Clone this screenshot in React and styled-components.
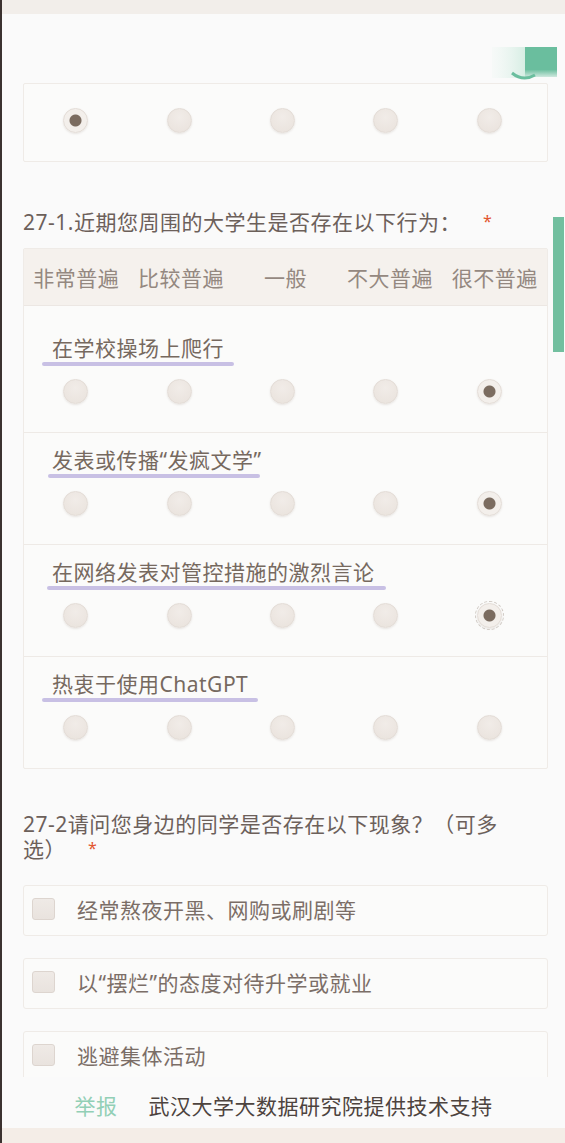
import React from 'react';
import styled, { createGlobalStyle } from 'styled-components';

const GlobalStyle = createGlobalStyle`
  html, body {
    margin: 0;
    padding: 0;
    background: #fafafa;
  }
  body {
    font-family: "Noto Sans", "Noto Sans CJK SC", sans-serif;
  }
`;

const SCALE = ['非常普遍', '比较普遍', '一般', '不大普遍', '很不普遍'];

const ITEMS = [
    { text: '在学校操场上爬行', pick: 4, ul: { l: -10, r: -10 } },
    { text: '发表或传播“发疯文学”', pick: 4, ul: { l: -4, r: 2 } },
    { text: '在网络发表对管控措施的激烈言论', pick: 4, focus: true, ul: { l: -5, r: -11 } },
    { text: '热衷于使用ChatGPT', pick: -1, ul: { l: -10, r: -10 } },
];

const CHOICES = ['经常熬夜开黑、网购或刷剧等', '以“摆烂”的态度对待升学或就业', '逃避集体活动'];

const Page = styled.div`
  width: 565px;
  height: 1143px;
  box-sizing: border-box;
  border-left: 2px solid #3b3230;
  display: flex;
  flex-direction: column;
  overflow: hidden;
  background: #fafafa;
`;

const TopBand = styled.div`
  height: 14px;
  flex-shrink: 0;
  background: #f2eeea;
`;

const Main = styled.main`
  flex: 1;
  position: relative;
  overflow: hidden;
  padding: 0 17px 0 21px;
`;

const Deco = styled.svg`
  position: absolute;
  top: 32px;
  right: 8px;
`;

const ScrollThumb = styled.div`
  position: absolute;
  top: 203px;
  right: 1px;
  width: 11px;
  height: 135px;
  background: #72bf9f;
`;

const Card = styled.div`
  margin-top: ${p => p.$top || 0}px;
  border: 1px solid #efebe7;
  border-radius: 2px;
  background: #fbfbfa;
  padding: ${p => p.$pad || '0'};
`;

const Title = styled.div`
  margin-top: ${p => p.$top}px;
  font-size: 21px;
  letter-spacing: 0.5px;
  line-height: 24px;
  color: #6c605a;
`;

const Star = styled.span`
  margin-left: 22px;
  color: #e2552f;
  font-size: 16px;
  vertical-align: 3px;
`;

const HeadRow = styled.div`
  height: 56px;
  display: grid;
  grid-template-columns: repeat(5, 1fr);
  align-items: center;
  background: #f5f1ed;
  border-bottom: 1px solid #ece7e3;
`;

const HeadCell = styled.div`
  text-align: center;
  font-size: 21px;
  letter-spacing: 0.5px;
  color: #948880;
  white-space: nowrap;
`;

const ItemRow = styled.div`
  padding: ${p => (p.$first ? 30 : 15)}px 0 28px 28px;
  border-top: ${p => (p.$first ? 'none' : '1px solid #eeeae6')};
`;

const ItemLabel = styled.div`
  position: relative;
  width: fit-content;
  font-size: 21px;
  letter-spacing: 0.5px;
  line-height: 24px;
  color: #76695f;

  &::after {
    content: '';
    position: absolute;
    left: ${p => p.$l}px;
    right: ${p => p.$r}px;
    bottom: -6px;
    height: 4px;
    border-radius: 2px;
    background: #c8c0e4;
  }
`;

const RadioGrid = styled.div`
  display: grid;
  grid-template-columns: repeat(5, 1fr);
  justify-items: center;
  margin: ${p => (p.$inRow ? '19px 6px 0 -28px' : '0 6px 0 0')};
`;

const Radio = styled.span`
  width: 25px;
  height: 25px;
  box-sizing: border-box;
  border-radius: 50%;
  border: 1px solid #e3dcd6;
  background: ${p => (p.$checked
        ? 'radial-gradient(circle, #7b6c60 0 5.5px, #f3efeb 6.5px)'
        : 'radial-gradient(circle at 50% 35%, #f1ece8, #e9e2dc)')};
  box-shadow: 0 1px 2px rgba(120, 100, 90, 0.15);
  outline: ${p => (p.$focus ? '1px dashed #cfc9c3' : 'none')};
  outline-offset: 1px;
`;

const ChoiceBox = styled.label`
  margin-top: ${p => p.$top}px;
  height: 51px;
  box-sizing: border-box;
  display: flex;
  align-items: center;
  gap: 22px;
  padding: 0 0 4px 8px;
  border: 1px solid #efebe7;
  border-radius: 3px;
  background: #fbfbfa;
`;

const Check = styled.span`
  width: 23px;
  height: 22px;
  box-sizing: border-box;
  border: 1px solid #ddd5cf;
  border-radius: 3px;
  background: linear-gradient(#efeae6, #e9e3de);
`;

const ChoiceText = styled.span`
  font-size: 21px;
  letter-spacing: 0.5px;
  color: #7b6e67;
`;

const Footer = styled.footer`
  height: 51px;
  flex-shrink: 0;
  box-sizing: border-box;
  padding-top: 4px;
  display: flex;
  align-items: center;
  justify-content: center;
  gap: 31px;
  font-size: 21px;
  letter-spacing: 0.5px;
  background: #fafafa;
`;

const Report = styled.span`
  color: #92cfb6;
`;

const Credit = styled.span`
  color: #4d433e;
`;

const BottomBand = styled.div`
  height: 15px;
  flex-shrink: 0;
  background: #f4ede7;
`;

const Radios = ({ pick, focus, inRow }) => (
    <RadioGrid $inRow={inRow}>
        {SCALE.map((s, i) => (
            <Radio key={s} $checked={i === pick} $focus={focus && i === pick} />
        ))}
    </RadioGrid>
);

export default function App() {
    return (
        <Page>
            <GlobalStyle />
            <TopBand />
            <Main>
                <Deco width="65" height="34" viewBox="0 0 65 34">
                    <defs>
                        <linearGradient id="fade" x1="0" x2="1">
                            <stop offset="0" stopColor="#eef7f3" stopOpacity="0.3" />
                            <stop offset="1" stopColor="#d7eee4" />
                        </linearGradient>
                        <linearGradient id="down" x1="0" y1="0" x2="0" y2="1">
                            <stop offset="0.75" stopColor="#6abe9e" />
                            <stop offset="1" stopColor="#6abe9e" stopOpacity="0.3" />
                        </linearGradient>
                    </defs>
                    <rect x="0" y="1" width="33" height="31" fill="url(#fade)" />
                    <rect x="33" y="1" width="32" height="30" fill="url(#down)" />
                    <path d="M20 27 Q31 36 43 29" stroke="#6abe9e" strokeWidth="3" fill="none" />
                </Deco>
                <ScrollThumb />

                <Card $top={69} $pad="24px 0 28px">
                    <Radios pick={0} />
                </Card>

                <Title $top={47}>
                    27-1.近期您周围的大学生是否存在以下行为：<Star>*</Star>
                </Title>

                <Card $top={14}>
                    <HeadRow>
                        {SCALE.map(s => <HeadCell key={s}>{s}</HeadCell>)}
                    </HeadRow>
                    {ITEMS.map((it, i) => (
                        <ItemRow key={it.text} $first={i === 0}>
                            <ItemLabel $l={it.ul.l} $r={it.ul.r}>{it.text}</ItemLabel>
                            <Radios pick={it.pick} focus={it.focus} inRow />
                        </ItemRow>
                    ))}
                </Card>

                <Title $top={43}>
                    27-2请问您身边的同学是否存在以下现象？（可多<br />选）<Star>*</Star>
                </Title>

                {CHOICES.map((c, i) => (
                    <ChoiceBox key={c} $top={i === 0 ? 24 : 22}>
                        <Check />
                        <ChoiceText>{c}</ChoiceText>
                    </ChoiceBox>
                ))}
            </Main>
            <Footer>
                <Report>举报</Report>
                <Credit>武汉大学大数据研究院提供技术支持</Credit>
            </Footer>
            <BottomBand />
        </Page>
    );
}
